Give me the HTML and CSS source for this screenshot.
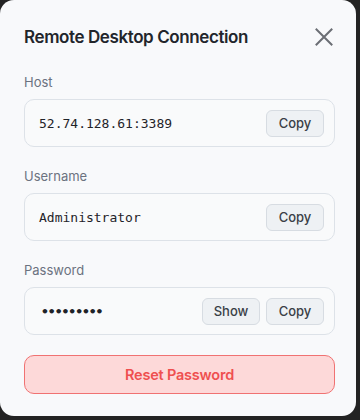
FILE: index.html
```html
<!DOCTYPE html>
<html lang="en">
<head>
<meta charset="utf-8">
<title>Remote Desktop Connection</title>
<link rel="stylesheet" href="styles.css">
</head>
<body>
<div class="dialog">
  <div class="header">
    <h1 class="title">Remote Desktop Connection</h1>
    <button class="close" aria-label="Close">
      <svg width="18" height="18" viewBox="0 0 18 18"><path d="M1.5 1.5 L16.5 16.5 M16.5 1.5 L1.5 16.5" stroke="#6b6e74" stroke-width="2" fill="none" stroke-linecap="square"/></svg>
    </button>
  </div>

  <div class="field">
    <div class="label">Host</div>
    <div class="box">
      <span class="value">52.74.128.61:3389</span>
      <div class="actions"><button class="btn">Copy</button></div>
    </div>
  </div>

  <div class="field">
    <div class="label">Username</div>
    <div class="box">
      <span class="value">Administrator</span>
      <div class="actions"><button class="btn">Copy</button></div>
    </div>
  </div>

  <div class="field">
    <div class="label">Password</div>
    <div class="box">
      <span class="value dots">•••••••••</span>
      <div class="actions"><button class="btn">Show</button><button class="btn">Copy</button></div>
    </div>
  </div>

  <button class="reset">Reset Password</button>
</div>
</body>
</html>
```

FILE: styles.css
```css
* { box-sizing: border-box; }
html, body { margin: 0; padding: 0; }
body {
  background: #232323;
  width: 360px;
  height: 420px;
  font-family: Inter, "Noto Sans", sans-serif;
}
.dialog {
  width: 356px;
  height: 416px;
  background: #f8f9fb;
  border-radius: 14px;
  padding: 25px 21px 22px 24px;
  display: flex;
  flex-direction: column;
}
.header {
  display: flex;
  align-items: center;
  justify-content: space-between;
  height: 24px;
  margin-bottom: 24px;
}
.title {
  margin: 0;
  font-size: 17px;
  line-height: 24px;
  font-weight: 600;
  color: #22252b;
  letter-spacing: -0.4px;
}
.close {
  border: 0;
  background: none;
  padding: 0;
  width: 18px;
  height: 18px;
  margin-right: 2px;
  display: flex;
}
.field {
  display: flex;
  flex-direction: column;
  margin-bottom: 20px;
}
.label {
  font-size: 13px;
  line-height: 18px;
  color: #6b7280;
  margin-bottom: 8px;
}
.box {
  height: 48px;
  border: 1px solid #dde2e8;
  border-radius: 10px;
  background: #f9fafb;
  display: flex;
  align-items: center;
  justify-content: space-between;
  padding: 0 10px 0 14px;
}
.value {
  font-family: "DejaVu Sans Mono", "Liberation Mono", monospace;
  font-size: 13px;
  color: #1f2329;
}
.dots {
  letter-spacing: -1px;
  font-size: 13px;
  padding-left: 2px;
  font-weight: 700;
}
.actions {
  display: flex;
  gap: 6px;
}
.btn {
  height: 27px;
  width: 58px;
  border: 1px solid #d7dce2;
  border-radius: 6px;
  background: #eef1f4;
  font-family: Inter, "Noto Sans", sans-serif;
  font-size: 13px;
  font-weight: 500;
  color: #3a3f47;
  padding: 0;
}
.reset {
  margin-top: 0;
  height: 40px;
  width: 311px;
  border: 1px solid #f07272;
  border-radius: 10px;
  background: #fdd9d9;
  color: #ef4f4f;
  font-family: Inter, "Noto Sans", sans-serif;
  font-size: 14.5px;
  font-weight: 600;
  letter-spacing: -0.2px;
}
```
